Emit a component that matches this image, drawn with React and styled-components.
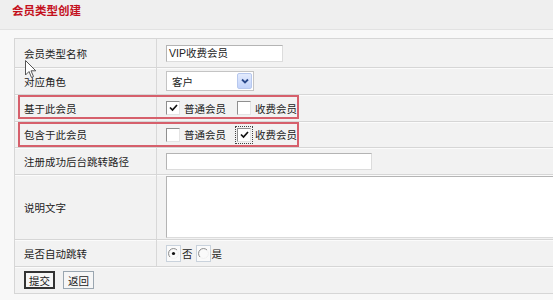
import React from 'react';
import styled, { createGlobalStyle } from 'styled-components';

const GlobalStyle = createGlobalStyle`
  body {
    margin: 0;
    background: #f8f8f8;
    font-family: "Liberation Sans", "Noto Sans CJK SC", sans-serif;
    color: #222;
  }
`;

const Page = styled.div`
  width: 553px;
  height: 300px;
  overflow: hidden;
  position: relative;
`;

const Header = styled.div`
  height: 29px;
  background: #efefef;
  border-bottom: 1px solid #e2e2e2;
  display: flex;
  align-items: center;
  padding-left: 12px;
`;

const Title = styled.h1`
  margin: 0;
  font-size: 11.5px;
  font-weight: bold;
  color: #c4101c;
  margin-top: -9px;
`;

const Content = styled.div`
  padding: 8px 0 0 14px;
`;

const Table = styled.div`
  width: 560px;
  background: #f2f2f2;
  border: 1px solid #d6d6d6;
  border-right: none;
`;

const Row = styled.div`
  position: relative;
  display: grid;
  grid-template-columns: 142px 1fr;
  height: ${p => p.$h}px;
  border-top: ${p => (p.$first ? 'none' : '1px solid #d6d6d6')};
  box-shadow: ${p => (p.$first ? 'none' : 'inset 0 1px 0 #fbfbfb')};
`;

const Label = styled.div`
  display: flex;
  align-items: center;
  padding-left: 9px;
  font-size: 10.5px;
  color: #222;
  border-right: 1px solid #d8d8d8;
`;

const Value = styled.div`
  display: flex;
  align-items: center;
  padding-left: 9px;
  font-size: 10.5px;
  overflow: hidden;
`;

const TextInput = styled.div`
  box-sizing: border-box;
  flex-shrink: 0;
  width: ${p => p.$w}px;
  height: ${p => p.$ht || 17}px;
  background: #fff;
  border: 1px solid #b4b4b4;
  border-right-color: #dcdcdc;
  border-bottom-color: #dcdcdc;
  font-size: 10.5px;
  line-height: 15px;
  padding-left: 2px;
  color: #222;
  align-self: ${p => (p.$top ? 'flex-start' : 'center')};
  margin-top: ${p => (p.$top ? 1 : 0)}px;
`;

const Select = styled.div`
  box-sizing: border-box;
  width: 88px;
  height: 20px;
  background: #fff;
  border: 1px solid #c4c4c4;
  display: flex;
  align-items: center;
  justify-content: space-between;
  padding: 0 1px 0 5px;
  font-size: 10.5px;
`;

const SelectButton = styled.div`
  width: 15px;
  height: 16px;
  border: 1px solid #b7c8ee;
  border-radius: 2px;
  background: linear-gradient(#e3ebfd, #c2d3fb);
  box-sizing: border-box;
  display: flex;
  align-items: center;
  justify-content: center;
`;

const Choice = styled.label`
  display: flex;
  align-items: center;
  gap: 4px;
  margin-right: ${p => p.$mr || 0}px;
`;

const Box = styled.span`
  box-sizing: border-box;
  width: 14px;
  height: 14px;
  background: #fff;
  border: 1px solid #8f8f8f;
  border-right-color: #e4e4e4;
  border-bottom-color: #e4e4e4;
  display: flex;
  align-items: center;
  justify-content: center;
  outline: ${p => (p.$focus ? '1px dotted #444' : 'none')};
  outline-offset: 1px;
`;

const RadioBox = styled.span`
  box-sizing: border-box;
  width: 15px;
  height: 17px;
  border: 1px solid #c9d2dc;
  background: #fafafa;
  display: flex;
  align-items: center;
  justify-content: center;
`;

const RadioText = styled.span`
  margin-left: -3px;
`;

const Mark = styled.div`
  position: absolute;
  left: 3px;
  top: ${p => p.$top}px;
  width: 281px;
  height: ${p => p.$h}px;
  border: 2px solid #d6606c;
  box-sizing: border-box;
  pointer-events: none;
`;

const ButtonRow = styled.div`
  height: 26px;
  border-top: 1px solid #d6d6d6;
  box-shadow: inset 0 1px 0 #fbfbfb;
  display: flex;
  align-items: center;
  gap: 8px;
  padding-left: 9px;
`;

const Button = styled.button`
  box-sizing: border-box;
  height: 18px;
  width: 31px;
  padding: 0;
  font-family: inherit;
  font-size: 10.5px;
  color: #222;
  background: #f6f6f6;
  border: ${p => (p.$primary ? '2px solid #333' : '1px solid #9aa6b0')};
`;

const Cursor = styled.svg`
  position: absolute;
  left: 25px;
  top: 60px;
`;

const Check = () => (
  <svg width="9" height="8" viewBox="0 0 9 8">
    <path d="M1 3.5 L3.5 6 L8 1" fill="none" stroke="#111" strokeWidth="1.7" />
  </svg>
);

const Radio = ({ on }) => (
  <RadioBox>
    <svg width="11" height="11" viewBox="0 0 11 11">
      <path d="M9 2 A4.5 4.5 0 1 0 2 9" fill="none" stroke="#888" strokeWidth="1" />
      <path d="M2 9 A4.5 4.5 0 0 0 9 2" fill="none" stroke="#f0f0f0" strokeWidth="1" />
      {on && <circle cx="5.5" cy="5.5" r="1.6" fill="#111" />}
    </svg>
  </RadioBox>
);

const CheckItem = ({ checked, focus, text, mr }) => (
  <Choice $mr={mr}>
    <Box $focus={focus}>{checked && <Check />}</Box>
    {text}
  </Choice>
);

export default function App() {
  return (
    <Page>
      <GlobalStyle />
      <Header>
        <Title>会员类型创建</Title>
      </Header>
      <Content>
        <Table>
          <Row $h={28} $first>
            <Label>会员类型名称</Label>
            <Value>
              <TextInput $w={117}>VIP收费会员</TextInput>
            </Value>
          </Row>
          <Row $h={26}>
            <Label>对应角色</Label>
            <Value>
              <Select>
                客户
                <SelectButton>
                  <svg width="8" height="6" viewBox="0 0 8 6">
                    <path d="M1 1.5 L4 4.5 L7 1.5" fill="none" stroke="#2b4a8c" strokeWidth="1.8" />
                  </svg>
                </SelectButton>
              </Select>
            </Value>
          </Row>
          <Row $h={26}>
            <Label>基于此会员</Label>
            <Value>
              <CheckItem checked text="普通会员" mr={11} />
              <CheckItem text="收费会员" />
            </Value>
            <Mark $top={0} $h={24} />
          </Row>
          <Row $h={25}>
            <Label>包含于此会员</Label>
            <Value>
              <CheckItem text="普通会员" mr={11} />
              <CheckItem checked focus text="收费会员" />
            </Value>
            <Mark $top={0} $h={25} />
          </Row>
          <Row $h={26}>
            <Label>注册成功后台跳转路径</Label>
            <Value>
              <TextInput $w={206} />
            </Value>
          </Row>
          <Row $h={64}>
            <Label>说明文字</Label>
            <Value>
              <TextInput $w={430} $ht={62} $top />
            </Value>
          </Row>
          <Row $h={26}>
            <Label>是否自动跳转</Label>
            <Value>
              <Choice $mr={3}>
                <Radio on />
                <RadioText>否</RadioText>
              </Choice>
              <Choice>
                <Radio />
                <RadioText>是</RadioText>
              </Choice>
            </Value>
          </Row>
          <ButtonRow>
            <Button $primary>提交</Button>
            <Button>返回</Button>
          </ButtonRow>
        </Table>
      </Content>
      <Cursor width="12" height="19" viewBox="0 0 12 19">
        <path d="M0.5 0.5 L0.5 15 L4 11.5 L6.5 17.5 L8.5 16.5 L6 10.8 L10.8 10.8 Z" fill="#fff" stroke="#555" strokeWidth="1" />
      </Cursor>
    </Page>
  );
}
